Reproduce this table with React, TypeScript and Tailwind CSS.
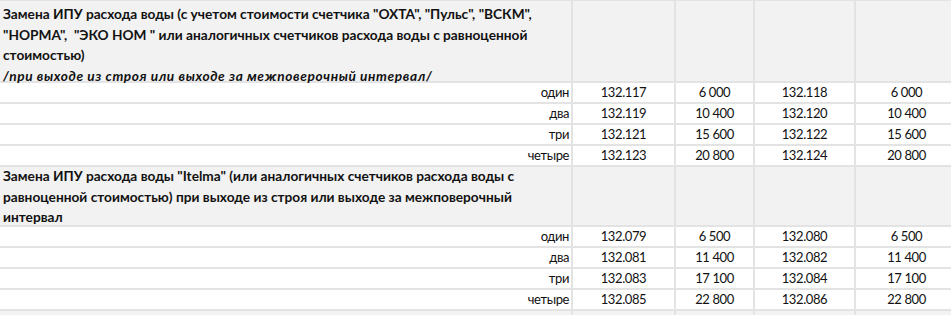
const font = { fontFamily: "Lato, 'Open Sans', sans-serif" };

type Row = { label: string; code1: string; price1: string; code2: string; price2: string };

const block1: Row[] = [
  { label: "один", code1: "132.117", price1: "6 000", code2: "132.118", price2: "6 000" },
  { label: "два", code1: "132.119", price1: "10 400", code2: "132.120", price2: "10 400" },
  { label: "три", code1: "132.121", price1: "15 600", code2: "132.122", price2: "15 600" },
  { label: "четыре", code1: "132.123", price1: "20 800", code2: "132.124", price2: "20 800" },
];

const block2: Row[] = [
  { label: "один", code1: "132.079", price1: "6 500", code2: "132.080", price2: "6 500" },
  { label: "два", code1: "132.081", price1: "11 400", code2: "132.082", price2: "11 400" },
  { label: "три", code1: "132.083", price1: "17 100", code2: "132.084", price2: "17 100" },
  { label: "четыре", code1: "132.085", price1: "22 800", code2: "132.086", price2: "22 800" },
];

const line = "border-[#e3e3e3]";

function HeaderRow({ height, children }: { height: string; children: React.ReactNode }) {
  return (
    <>
      <div className={`${height} border-r-2 border-b-2 ${line} bg-[#f2f2f2] pl-[3px]`}>
        {children}
      </div>
      <div className={`${height} border-r-2 border-b-2 ${line} bg-[#f2f2f2]`} />
      <div className={`${height} border-r-2 border-b-2 ${line} bg-[#f2f2f2]`} />
      <div className={`${height} border-r-2 border-b-2 ${line} bg-[#f2f2f2]`} />
      <div className={`${height} border-b-2 ${line} bg-[#f2f2f2]`} />
    </>
  );
}

function DataRow({ row }: { row: Row }) {
  const cell = `h-[21px] border-b-2 ${line} bg-white flex items-center text-[13px] leading-none tracking-[-0.4px]`;
  return (
    <>
      <div className={`${cell} border-r-2 justify-end pr-[2px] text-[13.5px] tracking-[-0.2px]`}>{row.label}</div>
      <div className={`${cell} border-r-2 justify-center`}>{row.code1}</div>
      <div className={`${cell} border-r-2 justify-center`}>{row.price1}</div>
      <div className={`${cell} border-r-2 justify-center`}>{row.code2}</div>
      <div className={`${cell} justify-center pl-[6px]`}>{row.price2}</div>
    </>
  );
}

export default function App() {
  return (
    <div className="w-[951px] h-[315px] overflow-hidden bg-white text-[#111]" style={font}>
      <div className={`grid grid-cols-[573px_103px_79px_101px_95px] border-t ${line}`}>
        <HeaderRow height="h-[82px]">
          <div className="pt-[3px] text-[13.7px] leading-[20.6px] font-bold whitespace-nowrap">
            Замена ИПУ расхода воды (с учетом стоимости счетчика "ОХТА", "Пульс", "ВСКМ",
            <br />
            "НОРМА",&nbsp; "ЭКО НОМ " или аналогичных счетчиков расхода воды с равноценной
            <br />
            стоимостью)
            <br />
            <span className="italic tracking-[0.6px]">/при выходе из строя или выходе за межповерочный интервал/</span>
          </div>
        </HeaderRow>
        {block1.map((r) => (
          <DataRow key={r.code1} row={r} />
        ))}
        <HeaderRow height="h-[60px]">
          <div className="-mt-[1px] text-[13.7px] leading-[20.6px] font-bold whitespace-nowrap">
            Замена ИПУ расхода воды "Itelma" (или аналогичных счетчиков расхода воды с
            <br />
            равноценной стоимостью) при выходе из строя или выходе за межповерочный
            <br />
            интервал
          </div>
        </HeaderRow>
        {block2.map((r) => (
          <DataRow key={r.code1} row={r} />
        ))}
        <HeaderRow height="h-[20px]">
          <span />
        </HeaderRow>
      </div>
    </div>
  );
}
